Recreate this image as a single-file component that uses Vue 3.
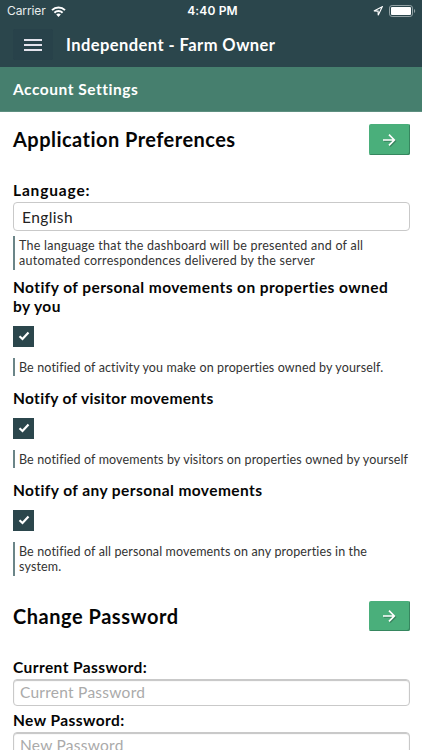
<script setup>
import { ref } from 'vue'

const notices = ref([
  {
    id: 'own',
    label: ['Notify of personal movements on properties owned', 'by you'],
    hint: ['Be notified of activity you make on properties owned by yourself.'],
    on: true
  },
  {
    id: 'visitor',
    label: ['Notify of visitor movements'],
    hint: ['Be notified of movements by visitors on properties owned by yourself'],
    on: true
  },
  {
    id: 'any',
    label: ['Notify of any personal movements'],
    hint: ['Be notified of all personal movements on any properties in the', 'system.'],
    on: true
  }
])
</script>

<template>
  <div class="screen">
    <header class="top">
      <div class="status">
        <div class="side">
          <span class="carrier">Carrier</span>
          <svg class="wifi" viewBox="0 0 15 11" width="15" height="11" fill="none" stroke="#fff" stroke-width="2">
            <path d="M1 4.1C4.6.6 10.4.6 14 4.1M3.4 6.7c2.3-2.2 5.9-2.2 8.2 0" />
            <path d="M7.5 10.9 5.2 8.5c1.3-1.2 3.3-1.2 4.6 0z" fill="#fff" stroke="none" />
          </svg>
        </div>
        <span class="time">4:40 PM</span>
        <div class="side end">
          <svg class="locate" viewBox="0 0 10 10" width="10" height="10" fill="none" stroke="#fff" stroke-width="1.1">
            <path d="M9.2.8.9 5l4.2.1.1 4.2z" />
          </svg>
          <svg viewBox="0 0 27 12" width="27" height="12">
            <rect x=".5" y=".5" width="23" height="11" rx="2.6" fill="none" stroke="#93a2a5" />
            <rect x="2" y="2" width="20" height="8" rx="1" fill="#fff" />
            <path d="M25 4v4c1.6-.5 1.6-3.500 0-4z" fill="#93a2a5" />
          </svg>
        </div>
      </div>
      <div class="nav">
        <button class="menu" aria-label="Menu"><i></i><i></i><i></i></button>
        <h1>Independent - Farm Owner</h1>
      </div>
    </header>
    <div class="sub"><h2>Account Settings</h2></div>

    <main>
      <div class="row">
        <h3 class="prefs">Application Preferences</h3>
        <button class="go" aria-label="Save preferences">
          <svg viewBox="0 0 14 14" width="14" height="14"><path d="M1 7h11M7 1.700 12.300 7 7 12.300" /></svg>
        </button>
      </div>
      <label class="label language">Language:</label>
      <div class="select">English</div>
      <p class="hint lang-hint"><span>The language that the dashboard will be presented and of all</span><span>automated correspondences delivered by the server</span></p>

      <section v-for="n in notices" :key="n.id" :class="['notice', n.id]">
        <div class="label"><span v-for="(t, i) in n.label" :key="i">{{ t }}</span></div>
        <button class="check" role="checkbox" :aria-checked="n.on" @click="n.on = !n.on">
          <svg v-if="n.on" viewBox="0 0 12 10" width="12" height="10"><path d="M1.500 5.200 4.500 8 10.500 1.600" /></svg>
        </button>
        <p class="hint"><span v-for="(t, i) in n.hint" :key="i">{{ t }}</span></p>
      </section>

      <div class="row second">
        <h3 class="change">Change Password</h3>
        <button class="go" aria-label="Save password">
          <svg viewBox="0 0 14 14" width="14" height="14"><path d="M1 7h11M7 1.700 12.300 7 7 12.300" /></svg>
        </button>
      </div>
      <label class="label current">Current Password:</label>
      <input type="password" placeholder="Current Password" />
      <label class="label new">New Password:</label>
      <input type="password" placeholder="New Password" />
    </main>
  </div>
</template>

<style>
body { margin: 0; background: #fff; }
</style>

<style scoped>
* { box-sizing: border-box; }
.screen {
  width: 422px; height: 750px; overflow: hidden; background: #fff; color: #050505;
  font-family: Lato, "Open Sans", sans-serif; white-space: nowrap; font-variant-ligatures: none;
}
h1, h2, h3, p { margin: 0; }
button { border: 0; padding: 0; font: inherit; }
.top { height: 67px; background: #2b464c; color: #fff; }
.status {
  height: 22px; display: flex; align-items: center; padding: 0 6px 0 7px;
  font: 12px/22px Inter, sans-serif;
}
.side { flex: 1; display: flex; align-items: center; gap: 5px; }
.end { justify-content: flex-end; gap: 6px; }
.carrier { letter-spacing: -.1px; color: #e9eded; }
.time { font-weight: 600; letter-spacing: .15px; margin-left: 2px; }
.nav { height: 45px; display: flex; align-items: center; padding: 0 13px; }
.menu {
  width: 40px; height: 31px; background: #28424a; display: flex; flex-direction: column;
  align-items: center; justify-content: center; gap: 3px; border-radius: 2px;
}
.menu i { width: 18px; height: 2px; background: #e3e3ec; }
h1 { font-size: 16.500px; line-height: 20px; margin-left: 13px; letter-spacing: .44px; }
.sub { height: 45px; background: #467f6e; color: #fff; display: flex; align-items: center; padding: 0 13px; border-bottom: 1px solid #5d8f80; }
h2 { font-size: 15.500px; line-height: 20px; letter-spacing: .53px; }
main { padding: 12px 12px 0 13px; display: flex; flex-direction: column; }
.row { height: 31px; display: flex; align-items: center; justify-content: space-between; }
.row.second { margin-top: 25px; }
h3 { font-size: 20px; line-height: 30px; letter-spacing: .46px; }
.prefs { margin-top: -2px; }
.change { letter-spacing: .53px; }
.go {
  width: 41px; height: 30.500px; border-radius: 2px; background: #4aaf7b; display: flex;
  align-items: center; justify-content: center; box-shadow: inset -1px -1px 0 #36865f;
}
.go svg { fill: none; stroke: #fff; stroke-width: 1.700; margin-right: 2px; filter: drop-shadow(1px 1px 0 #39825e); }
.label { font-size: 15.500px; line-height: 19px; font-weight: 700; letter-spacing: .42px; }
.label span, .hint span { display: block; }
.language { margin-top: 26px; letter-spacing: .85px; }
.visitor .label { letter-spacing: .33px; }
.select {
  margin-top: 2px; height: 29px; border: 1px solid #c9c9c9; border-radius: 4px; padding-left: 8px;
  font-size: 15.500px; line-height: 28px; color: #222; letter-spacing: .4px;
}
.hint {
  border-left: 2px solid #6b8588; padding: 2px 0 1px 4px; font-size: 12.500px; line-height: 15.300px;
  color: #333; letter-spacing: .13px;
}
.lang-hint { margin: 5px 0 8px; letter-spacing: .25px; }
.notice { display: flex; flex-direction: column; align-items: flex-start; }
.notice + .notice { margin-top: 12.900px; }
.check {
  width: 21px; height: 21px; margin: 10px 0 11px; background: #2b464c;
  display: flex; align-items: center; justify-content: center;
}
.check svg { fill: none; stroke: #fff; stroke-width: 2.200; }
.current { margin-top: 26.400px; }
.new { margin-top: 5px; }
input {
  margin: 2px 0 0; height: 27px; border: 1px solid #c9c9c9; border-radius: 4px; padding: 0 0 0 6px;
  font-family: inherit; font-size: 15.500px; letter-spacing: .25px; box-shadow: inset 0 1px 1px #c4c4c4; outline: 0; width: 100%;
}
input::placeholder { color: #aaa; opacity: 1; }
</style>
